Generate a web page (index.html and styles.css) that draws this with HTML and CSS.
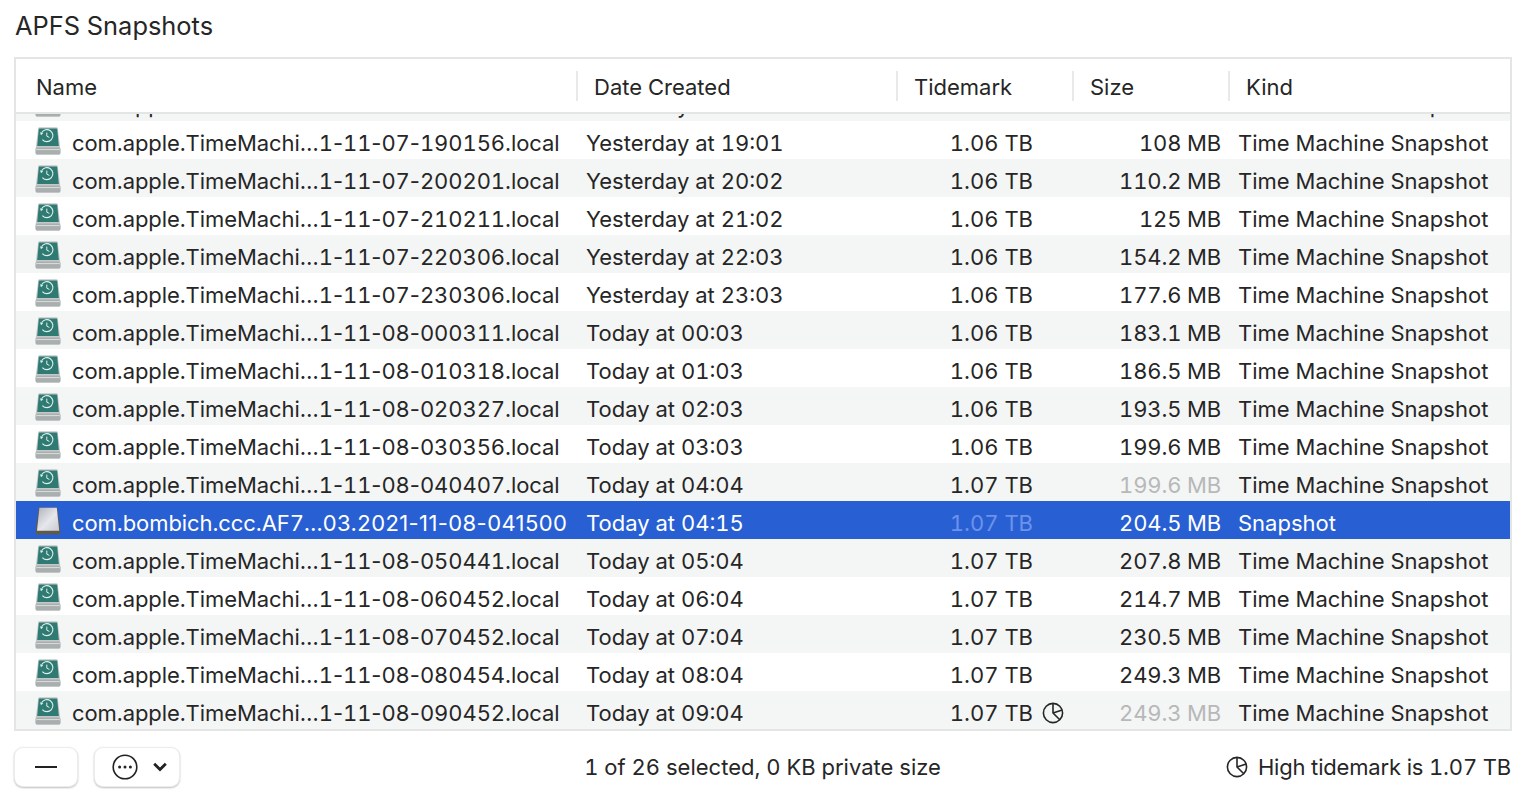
FILE: index.html
```html
<!DOCTYPE html>
<html>
<head>
    <meta charset="UTF-8">
    <title>APFS Snapshots</title>
    <link rel="stylesheet" href="styles.css">
</head>
<body>
    <svg class="defs" width="0" height="0">
        <defs>
            <linearGradient id="plain-face" x1="0" y1="0" x2="1" y2="1">
                <stop offset="0" stop-color="#aeb2bb"/>
                <stop offset="0.55" stop-color="#e6e7ec"/>
                <stop offset="1" stop-color="#c9cad0"/>
            </linearGradient>
        </defs>
        <symbol id="tm-disk" viewBox="0 0 26 28">
            <path d="M3.2 1.2Q3.4 .2 4.6 .2H21.4Q22.6 .2 22.8 1.2L25.4 22V26Q25.4 27.6 23.8 27.6H2.2Q.6 27.6 .6 26V22Z" fill="#c4c8c8"/>
            <path d="M3.8 2Q3.9 1.4 4.7 1.4H21.3Q22.1 1.4 22.2 2L23.8 19H2.2Z" fill="#2f7a72"/>
            <path d="M.6 22.4Q1 20.6 2.6 20.6H23.4Q25 20.6 25.4 22.4V26Q25.4 27.6 23.8 27.6H2.2Q.6 27.6 .6 26Z" fill="#a9aeae"/>
            <path d="M1.2 22.6H24.8" stroke="#dcdfdf" stroke-width="1"/>
            <path d="M6.6 5.8A6 6 0 1 1 7.4 12.6" fill="none" stroke="#dff0ec" stroke-width="1.1"/>
            <path d="M5 5.2L8.2 6.2 6 8.2Z" fill="#dff0ec"/>
            <path d="M11.8 5.6V9.2L14.4 10.4" fill="none" stroke="#dff0ec" stroke-width="1"/>
        </symbol>
        <symbol id="plain-disk" viewBox="0 0 26 28">
            <path d="M3.6 .4H22.4L25.4 24V26Q25.4 27.6 23.8 27.6H2.2Q.6 27.6 .6 26V24Z" fill="#5f5a4e"/>
            <path d="M4.4 .8H21.8L24.2 23.8H2Z" fill="url(#plain-face)"/>
        </symbol>
        <symbol id="tidemark" viewBox="0 0 22 22">
            <circle cx="11" cy="11" r="9.6" fill="none" stroke="currentColor" stroke-width="1.6"/>
            <path d="M11 1.4V11L17.8 17.8M11 11L20.2 8" fill="none" stroke="currentColor" stroke-width="1.6"/>
        </symbol>
    </svg>

    <h1 class="title">APFS Snapshots</h1>

    <div class="table">
        <div class="head">
            <div class="head-cell first">Name</div>
            <div class="head-cell">Date Created</div>
            <div class="head-cell">Tidemark</div>
            <div class="head-cell">Size</div>
            <div class="head-cell">Kind</div>
        </div>
        <div class="rows">
            <div class="row clipped"><div class="name"><svg class="disk"><use href="#tm-disk"/></svg><span>com.apple.TimeMachi…1<i class="hy">-</i>11<i class="hy">-</i>07<i class="hy">-</i>180144.local</span></div><div class="date">Yesterday at 18:01</div><div class="tide"><span>1.06 TB</span><i class="slot"></i></div><div class="size">98 MB</div><div class="kind">Time Machine Snapshot</div></div>
            <div class="row"><div class="name"><svg class="disk"><use href="#tm-disk"/></svg><span>com.apple.TimeMachi…1<i class="hy">-</i>11<i class="hy">-</i>07<i class="hy">-</i>190156.local</span></div><div class="date">Yesterday at 19:01</div><div class="tide"><span>1.06 TB</span><i class="slot"></i></div><div class="size">108 MB</div><div class="kind">Time Machine Snapshot</div></div>
            <div class="row"><div class="name"><svg class="disk"><use href="#tm-disk"/></svg><span>com.apple.TimeMachi…1<i class="hy">-</i>11<i class="hy">-</i>07<i class="hy">-</i>200201.local</span></div><div class="date">Yesterday at 20:02</div><div class="tide"><span>1.06 TB</span><i class="slot"></i></div><div class="size">110.2 MB</div><div class="kind">Time Machine Snapshot</div></div>
            <div class="row"><div class="name"><svg class="disk"><use href="#tm-disk"/></svg><span>com.apple.TimeMachi…1<i class="hy">-</i>11<i class="hy">-</i>07<i class="hy">-</i>210211.local</span></div><div class="date">Yesterday at 21:02</div><div class="tide"><span>1.06 TB</span><i class="slot"></i></div><div class="size">125 MB</div><div class="kind">Time Machine Snapshot</div></div>
            <div class="row"><div class="name"><svg class="disk"><use href="#tm-disk"/></svg><span>com.apple.TimeMachi…1<i class="hy">-</i>11<i class="hy">-</i>07<i class="hy">-</i>220306.local</span></div><div class="date">Yesterday at 22:03</div><div class="tide"><span>1.06 TB</span><i class="slot"></i></div><div class="size">154.2 MB</div><div class="kind">Time Machine Snapshot</div></div>
            <div class="row"><div class="name"><svg class="disk"><use href="#tm-disk"/></svg><span>com.apple.TimeMachi…1<i class="hy">-</i>11<i class="hy">-</i>07<i class="hy">-</i>230306.local</span></div><div class="date">Yesterday at 23:03</div><div class="tide"><span>1.06 TB</span><i class="slot"></i></div><div class="size">177.6 MB</div><div class="kind">Time Machine Snapshot</div></div>
            <div class="row"><div class="name"><svg class="disk"><use href="#tm-disk"/></svg><span>com.apple.TimeMachi…1<i class="hy">-</i>11<i class="hy">-</i>08<i class="hy">-</i>000311.local</span></div><div class="date">Today at 00:03</div><div class="tide"><span>1.06 TB</span><i class="slot"></i></div><div class="size">183.1 MB</div><div class="kind">Time Machine Snapshot</div></div>
            <div class="row"><div class="name"><svg class="disk"><use href="#tm-disk"/></svg><span>com.apple.TimeMachi…1<i class="hy">-</i>11<i class="hy">-</i>08<i class="hy">-</i>010318.local</span></div><div class="date">Today at 01:03</div><div class="tide"><span>1.06 TB</span><i class="slot"></i></div><div class="size">186.5 MB</div><div class="kind">Time Machine Snapshot</div></div>
            <div class="row"><div class="name"><svg class="disk"><use href="#tm-disk"/></svg><span>com.apple.TimeMachi…1<i class="hy">-</i>11<i class="hy">-</i>08<i class="hy">-</i>020327.local</span></div><div class="date">Today at 02:03</div><div class="tide"><span>1.06 TB</span><i class="slot"></i></div><div class="size">193.5 MB</div><div class="kind">Time Machine Snapshot</div></div>
            <div class="row"><div class="name"><svg class="disk"><use href="#tm-disk"/></svg><span>com.apple.TimeMachi…1<i class="hy">-</i>11<i class="hy">-</i>08<i class="hy">-</i>030356.local</span></div><div class="date">Today at 03:03</div><div class="tide"><span>1.06 TB</span><i class="slot"></i></div><div class="size">199.6 MB</div><div class="kind">Time Machine Snapshot</div></div>
            <div class="row"><div class="name"><svg class="disk"><use href="#tm-disk"/></svg><span>com.apple.TimeMachi…1<i class="hy">-</i>11<i class="hy">-</i>08<i class="hy">-</i>040407.local</span></div><div class="date">Today at 04:04</div><div class="tide"><span>1.07 TB</span><i class="slot"></i></div><div class="size muted">199.6 MB</div><div class="kind">Time Machine Snapshot</div></div>
            <div class="row selected"><div class="name"><svg class="disk"><use href="#plain-disk"/></svg><span>com.bombich.ccc.AF7…<i class="hy">03.2021-11-08-041500</i></span></div><div class="date">Today at 04:15</div><div class="tide muted"><span>1.07 TB</span><i class="slot"></i></div><div class="size">204.5 MB</div><div class="kind">Snapshot</div></div>
            <div class="row"><div class="name"><svg class="disk"><use href="#tm-disk"/></svg><span>com.apple.TimeMachi…1<i class="hy">-</i>11<i class="hy">-</i>08<i class="hy">-</i>050441.local</span></div><div class="date">Today at 05:04</div><div class="tide"><span>1.07 TB</span><i class="slot"></i></div><div class="size">207.8 MB</div><div class="kind">Time Machine Snapshot</div></div>
            <div class="row"><div class="name"><svg class="disk"><use href="#tm-disk"/></svg><span>com.apple.TimeMachi…1<i class="hy">-</i>11<i class="hy">-</i>08<i class="hy">-</i>060452.local</span></div><div class="date">Today at 06:04</div><div class="tide"><span>1.07 TB</span><i class="slot"></i></div><div class="size">214.7 MB</div><div class="kind">Time Machine Snapshot</div></div>
            <div class="row"><div class="name"><svg class="disk"><use href="#tm-disk"/></svg><span>com.apple.TimeMachi…1<i class="hy">-</i>11<i class="hy">-</i>08<i class="hy">-</i>070452.local</span></div><div class="date">Today at 07:04</div><div class="tide"><span>1.07 TB</span><i class="slot"></i></div><div class="size">230.5 MB</div><div class="kind">Time Machine Snapshot</div></div>
            <div class="row"><div class="name"><svg class="disk"><use href="#tm-disk"/></svg><span>com.apple.TimeMachi…1<i class="hy">-</i>11<i class="hy">-</i>08<i class="hy">-</i>080454.local</span></div><div class="date">Today at 08:04</div><div class="tide"><span>1.07 TB</span><i class="slot"></i></div><div class="size">249.3 MB</div><div class="kind">Time Machine Snapshot</div></div>
            <div class="row"><div class="name"><svg class="disk"><use href="#tm-disk"/></svg><span>com.apple.TimeMachi…1<i class="hy">-</i>11<i class="hy">-</i>08<i class="hy">-</i>090452.local</span></div><div class="date">Today at 09:04</div><div class="tide"><span>1.07 TB</span><i class="slot"><svg class="mark"><use href="#tidemark"/></svg></i></div><div class="size muted">249.3 MB</div><div class="kind">Time Machine Snapshot</div></div>
        </div>
    </div>

    <div class="footer">
        <div class="buttons">
            <button class="btn btn-minus"><svg width="32" height="4"><rect x="5" y="1" width="22" height="2" fill="#222"/></svg></button>
            <button class="btn btn-more">
                <svg width="26" height="26" viewBox="0 0 26 26"><circle cx="13" cy="13" r="11.8" fill="none" stroke="#222" stroke-width="1.6"/><circle cx="7.6" cy="13" r="1.5" fill="#222"/><circle cx="13" cy="13" r="1.5" fill="#222"/><circle cx="18.4" cy="13" r="1.5" fill="#222"/></svg>
                <svg width="14" height="10" viewBox="0 0 14 10"><path d="M1.2 1.8L7 7.6 12.8 1.8" fill="none" stroke="#222" stroke-width="2.8"/></svg>
            </button>
        </div>
        <div class="status">1 of 26 selected, 0 KB private size</div>
        <div class="high"><svg class="mark"><use href="#tidemark"/></svg>High tidemark is 1.07 TB</div>
    </div>
</body>
</html>
```

FILE: styles.css
```css
html, body {
    height: 100%;
}
body {
    margin: 0;
    background-color: #fff;
    color: #262626;
    font-family: Inter, "Liberation Sans", sans-serif;
    font-size: 22px;
    font-variant-numeric: tabular-nums;
    overflow: hidden;
}
.defs {
    display: block;
    height: 0;
}
.title {
    margin: 0;
    padding: 11px 0 0 15px;
    height: 46px;
    box-sizing: border-box;
    font-size: 25.4px;
    line-height: 30px;
    font-weight: 400;
}
.table {
    margin: 11px 25px 0 14px;
    height: 674px;
    box-sizing: border-box;
    border: 2px solid #e4e5e5;
}
.head, .row {
    display: grid;
    grid-template-columns: 560px 320px 176px 156px 282px;
}
.head {
    height: 55px;
    box-sizing: border-box;
    border-bottom: 2px solid #e4e5e5;
    align-items: center;
}
.head-cell {
    height: 30px;
    line-height: 32px;
    padding-left: 16px;
    border-left: 2px solid #e8e9e9;
}
.head-cell.first {
    border-left: none;
    padding-left: 20px;
}
.rows {
    height: 615px;
    overflow: hidden;
}
.row {
    height: 38px;
    line-height: 44px;
    grid-template-rows: 38px;
    align-items: start;
    white-space: nowrap;
}
.row:nth-child(odd) {
    background-color: #f4f5f5;
}
.row.clipped {
    margin-top: -31px;
}
.row.selected {
    background-color: #2860d4;
    color: #fff;
}
.name {
    display: flex;
    align-items: center;
    padding-left: 19px;
    letter-spacing: -0.07px;
}
.disk {
    width: 26px;
    height: 28px;
    margin: -5px 11px 0 0;
    flex: none;
}
.hy {
    font-style: normal;
    font-variant-numeric: normal;
}
.selected .hy {
    letter-spacing: 0.4px;
}
.date {
    padding-left: 10px;
}
.tide {
    display: flex;
    justify-content: flex-end;
    align-items: center;
    padding-right: 8px;
}
.slot {
    display: flex;
    align-items: center;
    justify-content: flex-end;
    width: 31px;
    height: 22px;
}
.size {
    text-align: right;
    padding-right: 7px;
    letter-spacing: -0.15px;
}
.kind {
    padding-left: 10px;
}
.muted {
    color: #b7b8b8;
}
.selected .muted {
    color: #6c93e8;
}
.mark {
    width: 22px;
    height: 22px;
    flex: none;
}
.footer {
    display: grid;
    grid-template-columns: 1fr auto 1fr;
    align-items: center;
    margin: 16px 26px 0 14px;
    height: 40px;
}
.buttons {
    display: flex;
    gap: 16px;
}
.btn {
    display: flex;
    align-items: center;
    justify-content: center;
    height: 40px;
    padding: 0;
    background-color: #fff;
    border: 1px solid #ececec;
    border-radius: 9px;
    box-shadow: 0 1px 2px rgba(0, 0, 0, 0.25);
}
.btn-minus {
    width: 64px;
}
.btn-more {
    width: 86px;
    gap: 15px;
    padding-left: 4px;
}
.status {
    text-align: center;
}
.high {
    display: flex;
    justify-content: flex-end;
    align-items: center;
    gap: 10px;
    letter-spacing: -0.17px;
}
```
